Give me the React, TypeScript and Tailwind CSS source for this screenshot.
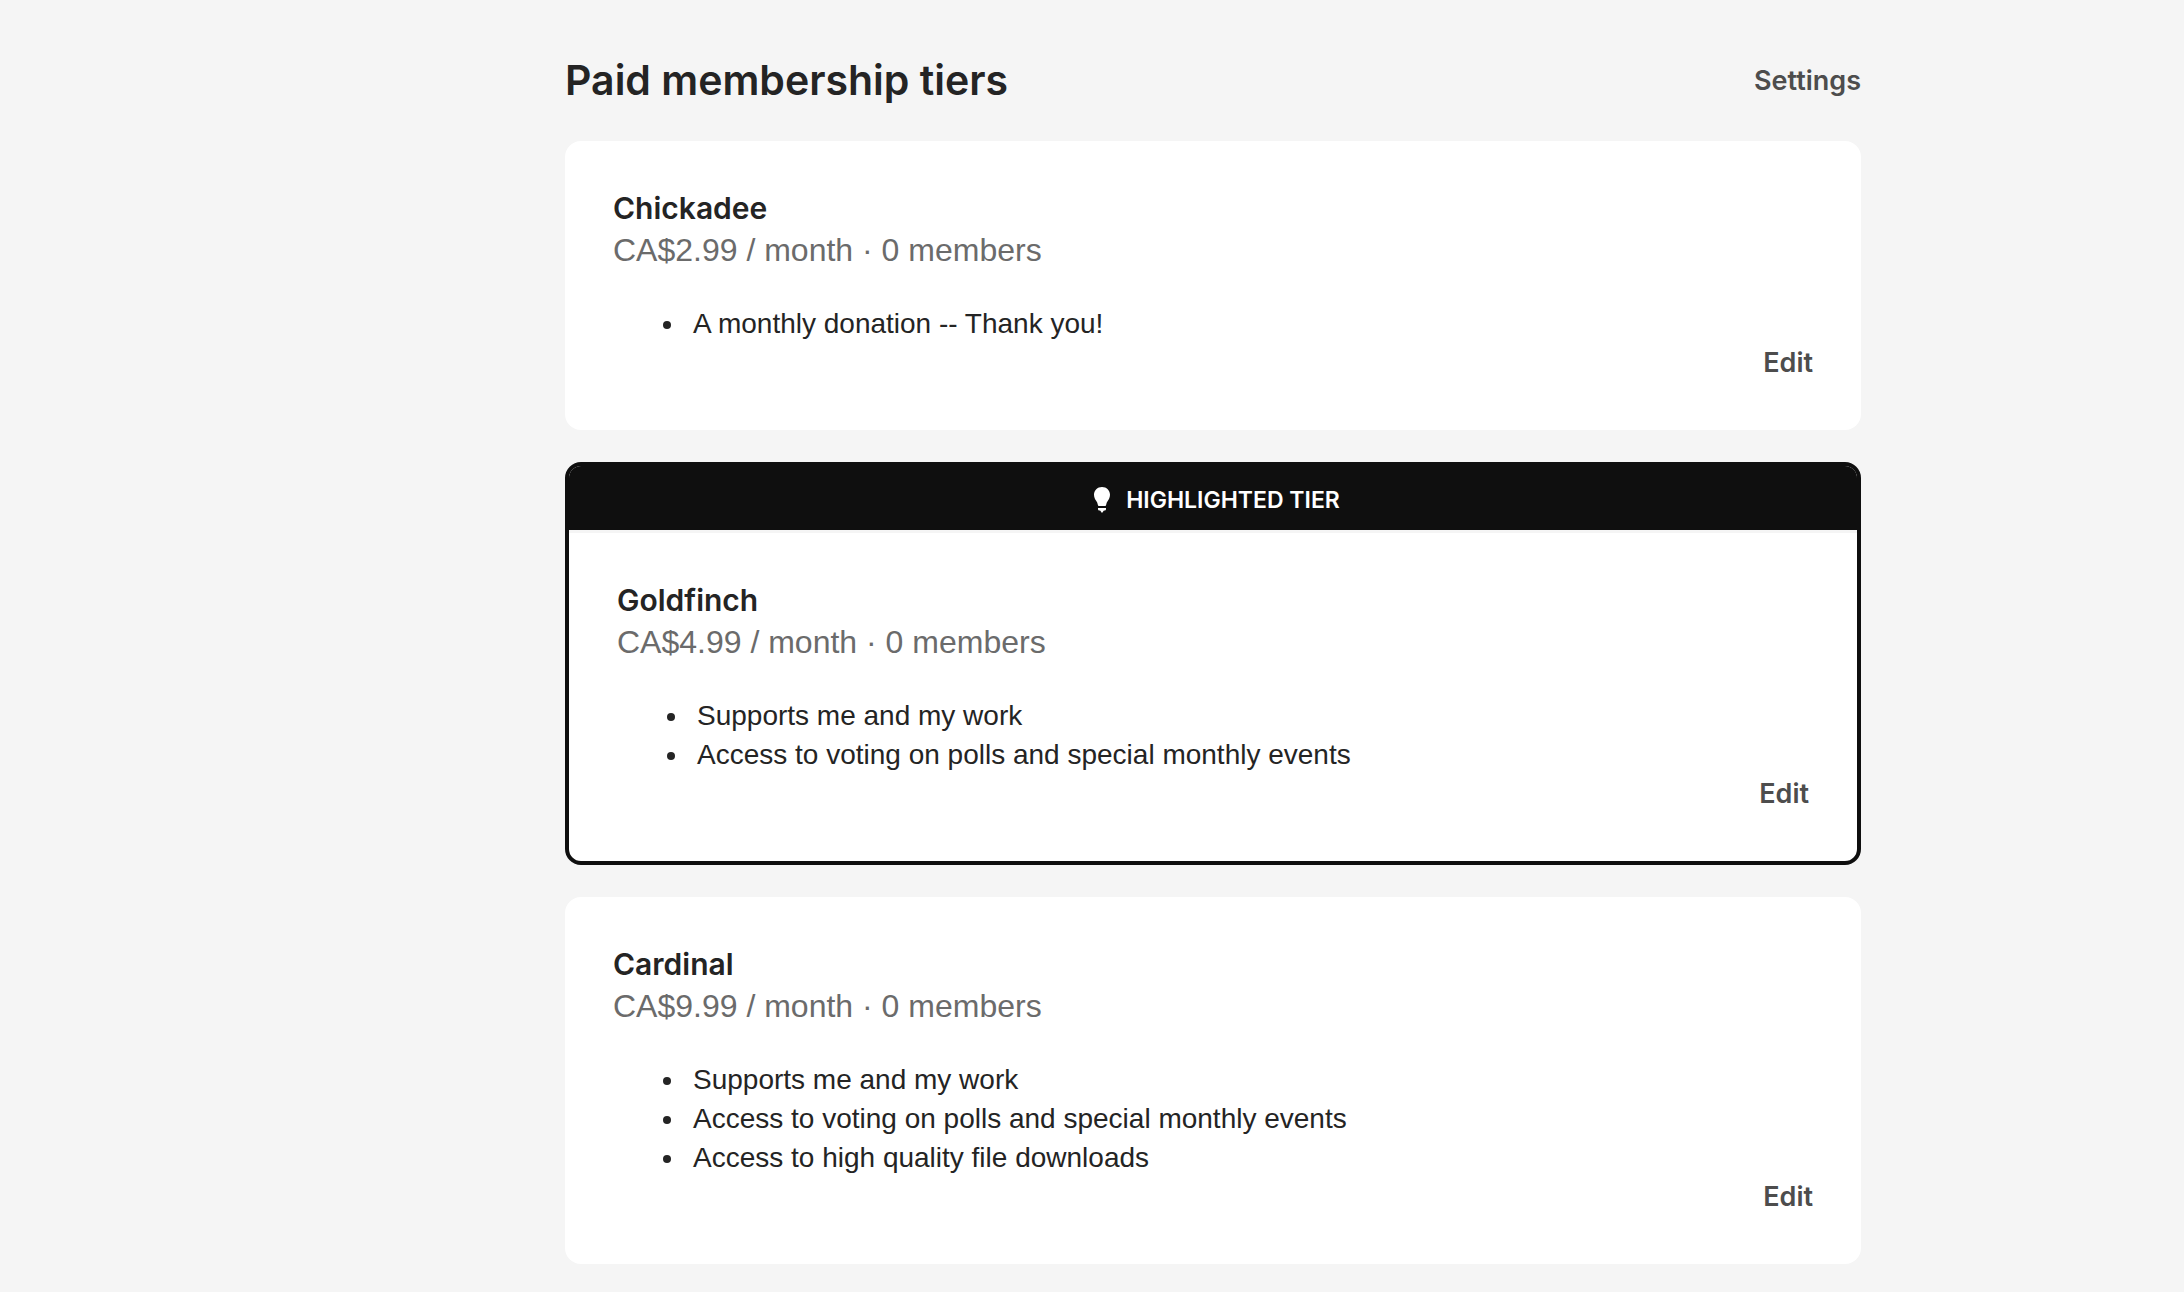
import React from "react";

interface Tier {
  name: string;
  price: string;
  members: number;
  benefits: string[];
  highlighted?: boolean;
}

const tiers: Tier[] = [
  {
    name: "Chickadee",
    price: "CA$2.99",
    members: 0,
    benefits: ["A monthly donation -- Thank you!"],
  },
  {
    name: "Goldfinch",
    price: "CA$4.99",
    members: 0,
    benefits: [
      "Supports me and my work",
      "Access to voting on polls and special monthly events",
    ],
    highlighted: true,
  },
  {
    name: "Cardinal",
    price: "CA$9.99",
    members: 0,
    benefits: [
      "Supports me and my work",
      "Access to voting on polls and special monthly events",
      "Access to high quality file downloads",
    ],
  },
];

const BulbIcon: React.FC = () => (
  <svg viewBox="0 0 32 32" className="size-8 fill-white" aria-hidden="true">
    <path d="M16 3C11.4 3 8 6.4 8 10.8c0 2.7 1.1 4.4 2.3 6.3.8 1.3 1.3 2.3 1.6 3.8.1.7.6 1.1 1.2 1.1h5.8c.6 0 1.1-.4 1.2-1.1.3-1.5.8-2.5 1.6-3.8C22.9 15.2 24 13.5 24 10.8 24 6.4 20.6 3 16 3z" />
    <path d="M12 24h8v.9c0 1-.7 1.7-1.7 1.7h-.4L16 29l-1.9-2.4h-.4c-1 0-1.7-.7-1.7-1.7z" />
  </svg>
);

const EditButton: React.FC<{ tier: string }> = ({ tier }) => (
  <button
    type="button"
    aria-label={`Edit ${tier}`}
    className="cursor-pointer text-[27px] leading-[39px] font-semibold text-[#4d4d4d]"
  >
    Edit
  </button>
);

const TierCard: React.FC<{ tier: Tier }> = ({ tier }) => (
  <article
    className={
      tier.highlighted
        ? "overflow-hidden rounded-2xl border-4 border-[#0f0f0f] bg-white"
        : "overflow-hidden rounded-2xl bg-white"
    }
  >
    {tier.highlighted && (
      <div className="flex h-[67px] items-center justify-center gap-2 border-b-3 border-[#f5f5f5] bg-[#0f0f0f] pt-1">
        <BulbIcon />
        <span className="text-[23px] font-semibold text-white uppercase">
          Highlighted tier
        </span>
      </div>
    )}
    <div className="px-12 pt-[46px] pb-12">
      <h2 className="text-[30px] leading-[42px] font-semibold">{tier.name}</h2>
      <p className="font-['Liberation_Sans',Arial,sans-serif] text-[32px] leading-[42px] text-[#6b6b6b]">
        {tier.price} / month · {tier.members} members
      </p>
      <ul className="mt-[33px] list-disc pl-[73px] font-['Liberation_Sans',Arial,sans-serif] text-[28px] leading-[39px]">
        {tier.benefits.map((benefit) => (
          <li key={benefit} className="pl-[7px]">
            {benefit}
          </li>
        ))}
      </ul>
      <div className="flex justify-end">
        <EditButton tier={tier.name} />
      </div>
    </div>
  </article>
);

export default function App() {
  return (
    <div className="min-h-screen bg-[#f5f5f5] pt-[52px] pb-7 font-[Inter,sans-serif] text-[#242424] lg:pl-[242px]">
      <main className="mx-auto max-w-[1296px]">
        <header className="mb-[33px] flex items-center justify-between">
          <h1 className="text-[41px] leading-[56px] font-semibold">Paid membership tiers</h1>
          <a href="#settings" className="text-[27px] leading-[39px] font-semibold text-[#4d4d4d]">
            Settings
          </a>
        </header>
        <div className="flex flex-col gap-8">
          {tiers.map((tier) => (
            <TierCard key={tier.name} tier={tier} />
          ))}
        </div>
      </main>
    </div>
  );
}
